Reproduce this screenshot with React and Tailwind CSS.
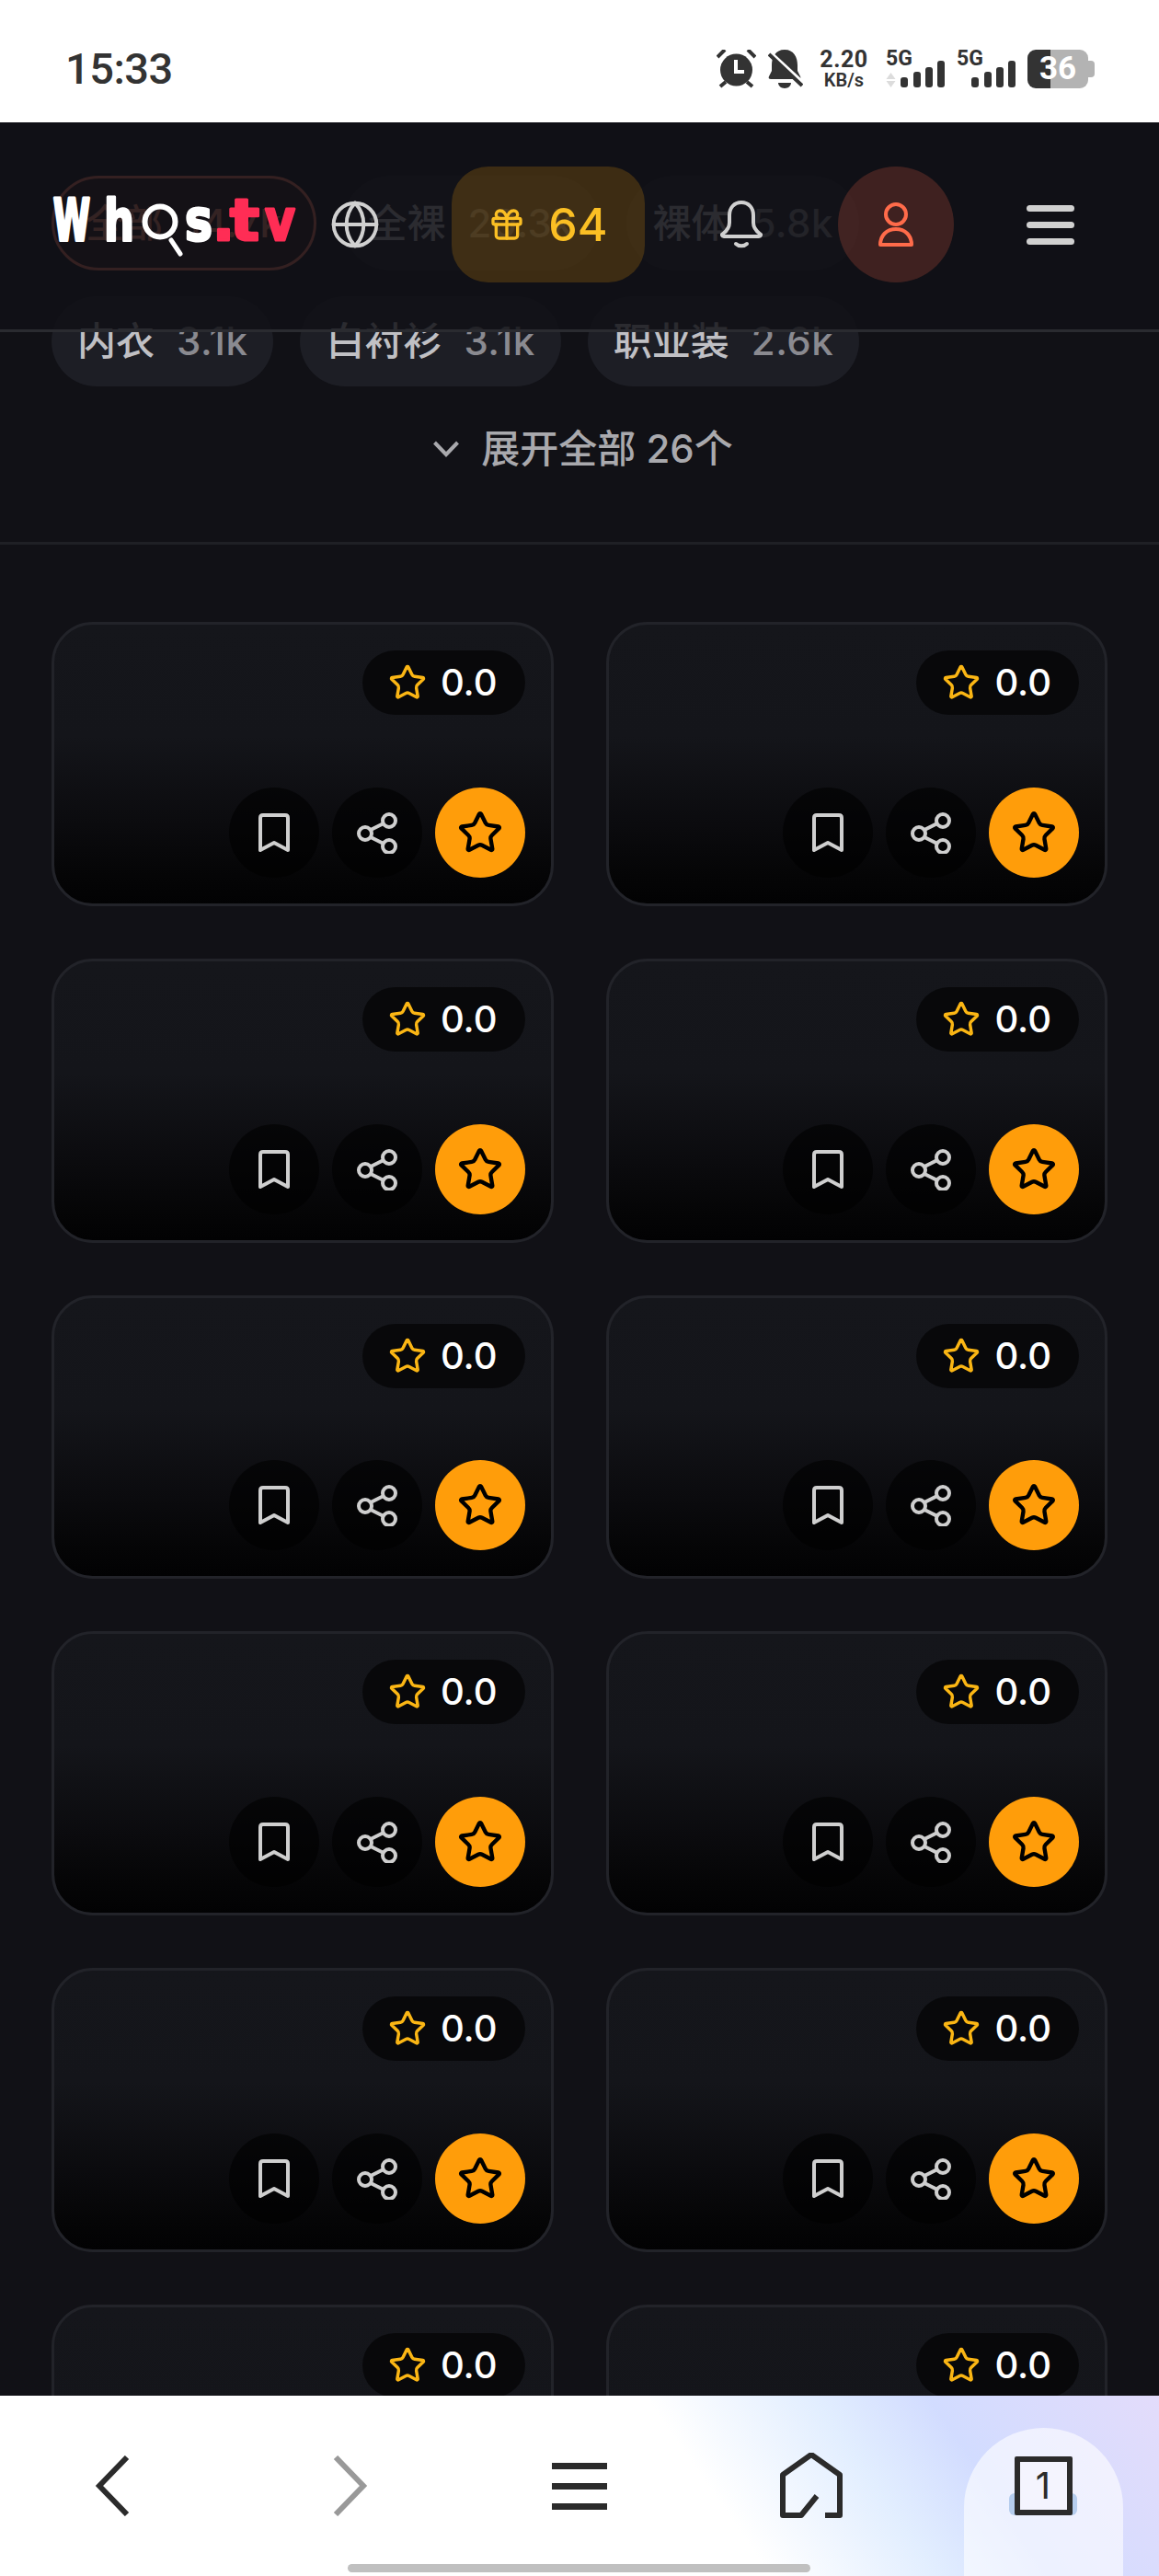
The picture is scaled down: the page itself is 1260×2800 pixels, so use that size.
import { Globe, Gift, Star } from "lucide-react";

const rows = [
  [
    { name: "全部", count: "14.7k", active: true },
    { name: "全裸", count: "20.3k" },
    { name: "裸体", count: "5.8k" },
  ],
  [
    { name: "内衣", count: "3.1k" },
    { name: "白衬衫", count: "3.1k" },
    { name: "职业装", count: "2.6k" },
  ],
];

const cards = Array.from({ length: 12 }, (_, i) => i);

function Signal({ arrows }) {
  return (
    <svg className="overflow-visible" width="64" height="43" viewBox="0 0 64 43" fill="#333">
      <text x="0" y="18" fontFamily="Roboto, sans-serif" fontWeight="700" fontSize="23">
        5G
      </text>
      {arrows && (
        <>
          <path d="M5.5 26 L10.5 33 H0.5 Z" fill="#dcdcdc" />
          <path d="M5.5 42 L10.5 35 H0.5 Z" fill="#dcdcdc" />
        </>
      )}
      <rect x="16" y="31" width="8" height="11" rx="3" />
      <rect x="30" y="25" width="8" height="17" rx="3" />
      <rect x="43" y="20" width="8" height="22" rx="3" />
      <rect x="56" y="13" width="8" height="29" rx="3" />
    </svg>
  );
}

function StatusBar() {
  return (
    <div className="h-[133px] shrink-0 bg-white flex items-center justify-between pl-[71px] pr-[70px] pt-[16px] text-[#333]">
      <div className="text-[47px] font-medium font-['Roboto',sans-serif] leading-none tracking-[-0.5px]">15:33</div>
      <div className="flex items-center">
        <svg width="43" height="42" viewBox="779 54 43 42" fill="none">
          <circle cx="800.5" cy="76" r="17.5" fill="#333" />
          <path d="M780 62l8-8M821 62l-8-8M783 94l6-5M818 94l-6-5" stroke="#333" strokeWidth="4" />
          <path d="M800 65v13h9" stroke="#fff" strokeWidth="4" />
        </svg>
        <svg className="ml-[13px]" width="38" height="42" viewBox="835 54 38 42" fill="none">
          <path
            d="M853 54c-10 0-14 8-14 17v6l-3 6c-1 2 0 3 2 3h30c2 0 3-1 2-3l-3-6v-6c0-9-4-17-14-17z"
            fill="#333"
          />
          <path d="M846 90h14c0 3-3 6-7 6s-7-3-7-6z" fill="#333" />
          <path d="M834 54l40 37" stroke="#fff" strokeWidth="4" />
          <path d="M836 59l36 34" stroke="#333" strokeWidth="4" />
        </svg>
        <div className="ml-[18px] w-[53px] flex flex-col items-center font-['Roboto',sans-serif] text-[#333]">
          <span className="text-[25px] font-bold leading-[25px] tracking-[0.5px]">2.20</span>
          <span className="text-[20px] font-semibold leading-[21px]">KB/s</span>
        </div>
        <div className="ml-[19px]">
          <Signal arrows />
        </div>
        <div className="ml-[13px]">
          <Signal />
        </div>
        <div className="ml-[13px] flex items-center">
          <div className="relative w-[66px] h-[42px] rounded-[9px] bg-[linear-gradient(90deg,#333_38%,#b3b3b3_38%)] flex items-center justify-center">
            <span className="text-white text-[35px] font-bold font-['Roboto',sans-serif] leading-none">36</span>
          </div>
          <div className="w-[7px] h-[18px] rounded-r-[4px] bg-[#b3b3b3]" />
        </div>
      </div>
    </div>
  );
}

function Logo() {
  return (
    <svg className="shrink-0 overflow-visible" width="265" height="72" viewBox="57 210 265 72" aria-label="Whos.tv">
      <g
        fontFamily="'DejaVu Sans', sans-serif"
        fontWeight="700"
        fontSize="63"
        strokeWidth="3"
        strokeLinejoin="round"
        strokeLinecap="round"
      >
        <g fill="#fff" stroke="#fff">
          <text x="58" y="263" textLength="40" strokeWidth="4" lengthAdjust="spacingAndGlyphs">
            W
          </text>
          <text x="113" y="263" textLength="33" lengthAdjust="spacingAndGlyphs">
            h
          </text>
          <text x="201" y="263" textLength="30" lengthAdjust="spacingAndGlyphs">
            s
          </text>
        </g>
        <g fill="#ff2d55" stroke="#ff2d55">
          <text x="231" y="263">.</text>
          <text x="250" y="263" textLength="32" lengthAdjust="spacingAndGlyphs">
            t
          </text>
          <text x="288" y="263" textLength="33" lengthAdjust="spacingAndGlyphs">
            v
          </text>
        </g>
      </g>
      <circle cx="174" cy="243" r="16.5" fill="none" stroke="#fff" strokeWidth="6" />
      <path d="M186 263l10 15" stroke="#fff" strokeWidth="5" strokeLinecap="round" />
    </svg>
  );
}

function Header() {
  return (
    <div className="absolute top-0 inset-x-0 h-[228px] bg-[#111116]/85 border-b-[3px] border-[#2a2b30] flex items-center pl-[57px] pb-[3px] z-10">
      <Logo />
      <Globe className="ml-[36px] shrink-0" size={56} color="#d0d0d0" strokeWidth={1.7} />
      <div className="ml-[77px] w-[210px] h-[126px] rounded-[40px] bg-[#f59e0b]/20 flex items-center justify-center gap-[25px]">
        <Gift size={40} color="#fbbf24" strokeWidth={2} />
        <span className="text-[50px] font-medium text-[#fbbf24] leading-none">64</span>
      </div>
      <svg className="ml-[82px] shrink-0" width="46" height="53" viewBox="0 0 46 53" fill="none" stroke="#d0d0d0" strokeWidth="4" strokeLinejoin="round" strokeLinecap="round">
        <path d="M23 2c-8 0-13 6-13 14v8c0 5-3 9-7 12-2 1-1 3 1 3h38c2 0 3-2 1-3-4-3-7-7-7-12v-8c0-8-5-14-13-14z" />
        <path d="M17 47c3 3 9 3 12 0" />
      </svg>
      <div className="ml-[82px] w-[126px] h-[126px] rounded-full bg-[#ff6b4a]/20 flex items-center justify-center">
        <svg width="40" height="48" viewBox="0 0 40 48" fill="none" stroke="#ff6b4a" strokeWidth="4" strokeLinejoin="round">
          <ellipse cx="20" cy="13" rx="11" ry="11" />
          <path d="M3 46c0-10 7-17 17-17s17 7 17 17z" />
        </svg>
      </div>
      <div className="ml-[79px] w-[52px] flex flex-col gap-[11px]">
        <div className="h-[7px] rounded-full bg-[#d0d0d0]" />
        <div className="h-[7px] rounded-full bg-[#d0d0d0]" />
        <div className="h-[7px] rounded-full bg-[#d0d0d0]" />
      </div>
    </div>
  );
}

function Chip({ chip, height }) {
  return (
    <div
      className={`${height} rounded-full flex items-center gap-[24px] text-[42px] font-medium leading-none ${
        chip.active
          ? "px-[34px] border-[3px] border-[#ff7a5c] bg-[#ff5a3a]/10 text-[#ff8a6c]"
          : "px-[28px] bg-[#1d1e25] text-[#c0c0c4]"
      }`}
    >
      <span>{chip.name}</span>
      <span className={`tracking-[0.5px] ${chip.active ? "" : "text-[#8a8a90]"}`}>{chip.count}</span>
    </div>
  );
}

function VideoCard() {
  return (
    <div className="h-[308.8px] rounded-[45px] border-[3px] border-[#222329] bg-[linear-gradient(180deg,#15161b_0%,#14151a_40%,#0b0b0e_72%,#050506_90%,#020203_100%)] p-[28px] flex flex-col justify-between">
      <div className="self-end h-[70px] pl-[28px] pr-[30px] rounded-full bg-black/60 flex items-center gap-[15px]">
        <Star size={42} color="#fbb614" strokeWidth={2} />
        <span className="text-[40px] font-medium text-white leading-none">0.0</span>
      </div>
      <div className="flex justify-end gap-[14px]">
        <div className="w-[98px] h-[98px] rounded-full bg-black/60 flex items-center justify-center">
          <svg width="34" height="42" viewBox="0 0 34 42" fill="none" stroke="#cfcfcf" strokeWidth="4" strokeLinejoin="round">
            <path d="M2 40V5c0-2 1-3 3-3h24c2 0 3 1 3 3v35l-15-8z" />
          </svg>
        </div>
        <div className="w-[98px] h-[98px] rounded-full bg-black/60 flex items-center justify-center">
          <svg width="44" height="46" viewBox="388 881 44 46" fill="none" stroke="#cfcfcf" strokeWidth="4">
            <circle cx="423" cy="891" r="7" />
            <circle cx="397" cy="905" r="7" />
            <circle cx="423" cy="919" r="7" />
            <path d="M403 901l14-7M403 909l14 7" />
          </svg>
        </div>
        <div className="w-[98px] h-[98px] rounded-full bg-[#ff9d0a] flex items-center justify-center">
          <Star size={50} color="#000" strokeWidth={2.1} />
        </div>
      </div>
    </div>
  );
}

function Content() {
  return (
    <div className="pt-[58px]">
      <div className="px-[56px] flex flex-col gap-[28px]">
        {rows.map((row, i) => (
          <div key={i} className="flex gap-[29px]">
            {row.map((chip) => (
              <Chip key={chip.name} chip={chip} height={i === 0 ? "h-[103px]" : "h-[98px]"} />
            ))}
          </div>
        ))}
      </div>
      <div className="mt-[34px] h-[68px] pl-[8px] flex items-center justify-center gap-[24px] text-[42px] font-medium text-[#a9a9ad] leading-none">
        <svg width="28" height="18" viewBox="0 0 28 18" fill="none" stroke="#a9a9ad" strokeWidth="4">
          <path d="M1.5 2l12.5 13L26.5 2" />
        </svg>
        <span>展开全部 26个</span>
      </div>
      <div className="mt-[67px] h-[3px] bg-[#1f2025]" />
      <div className="mt-[84px] px-[56px] grid grid-cols-2 gap-[57px]">
        {cards.map((c) => (
          <VideoCard key={c} />
        ))}
      </div>
    </div>
  );
}

function BottomNav() {
  return (
    <div className="relative h-[196px] shrink-0 grid grid-cols-5 items-center justify-items-center bg-[linear-gradient(235deg,#e3dcfb_0%,#d2dcff_18%,#e2eeff_27%,#ffffff_40%)]">
      <svg className="-ml-[8px]" width="38" height="66" viewBox="0 0 38 66" fill="none" stroke="#2b2b2b" strokeWidth="6">
        <path d="M35 2L5 33l30 31" />
      </svg>
      <svg className="ml-[6px]" width="38" height="66" viewBox="0 0 38 66" fill="none" stroke="#999" strokeWidth="6">
        <path d="M3 2l30 31L3 64" />
      </svg>
      <div className="w-[60px] flex flex-col gap-[15px]">
        <div className="h-[7px] bg-[#2b2b2b]" />
        <div className="h-[7px] bg-[#2b2b2b]" />
        <div className="h-[7px] bg-[#2b2b2b]" />
      </div>
      <svg width="68" height="72" viewBox="848 2666 68 72" fill="none" stroke="#2b2b2b" strokeWidth="6" strokeLinejoin="round">
        <path d="M888 2713l-17 21h-20v-44l31-22 31 22v44h-16" />
      </svg>
      <div className="relative w-full h-full flex items-center justify-center">
        <div className="absolute bottom-0 w-[173px] h-[161px] rounded-t-full bg-white/60" />
        <div className="absolute top-[106px] w-[74px] h-[24px] rounded-[6px] bg-[#b5cdee]" />
        <div className="relative w-[63px] h-[64px] border-[6px] border-[#2b2b2b] rounded-[2px] bg-[#f4f4fe] flex items-center justify-center text-[40px] leading-none text-[#2b2b2b]">
          1
        </div>
      </div>
      <div className="absolute left-[378px] bottom-[4px] w-[503px] h-[9px] rounded-full bg-[#c0c0c0]" />
    </div>
  );
}

export default function App() {
  return (
    <div className="h-[2800px] flex flex-col overflow-hidden bg-[#111116] font-['Inter','Noto_Sans_CJK_SC',sans-serif]">
      <StatusBar />
      <div className="relative flex-1 overflow-hidden">
        <Header />
        <Content />
      </div>
      <BottomNav />
    </div>
  );
}
